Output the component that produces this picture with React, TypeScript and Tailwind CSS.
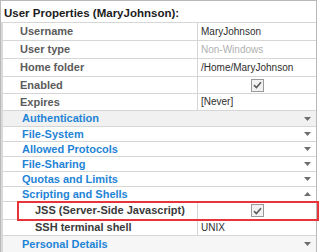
import type { ReactNode } from "react";

type Prop = {
  label: string;
  value?: ReactNode;
  height: string;
  indent?: boolean;
  dark?: boolean;
};

function Arrow({ up }: { up?: boolean }) {
  return (
    <svg width="7" height="4" viewBox="0 0 7 4" className="shrink-0">
      <path d={up ? "M0 4 L7 4 L3.5 0 Z" : "M0 0 L7 0 L3.5 4 Z"} fill="#6e6e6e" />
    </svg>
  );
}

function Check() {
  return (
    <span className="flex h-[13px] w-[13px] items-center justify-center border border-[#9a9a9a] bg-[#f2f2f2]">
      <svg width="9" height="8" viewBox="0 0 9 8">
        <path d="M1 4.2 L3.4 6.5 L8 1.2" fill="none" stroke="#5c5c5c" strokeWidth="1.6" />
      </svg>
    </span>
  );
}

function PropRow({ label, value, height, indent, dark }: Prop) {
  return (
    <div className={`flex border-t border-[#d6d6d6] ${height}`}>
      <div
        className={`flex w-[194px] shrink-0 items-center text-[11px] font-bold ${
          indent ? "pl-[32px]" : "pl-[17px]"
        } ${dark ? "text-[#3a3a3a]" : "text-[#5b5b5b]"}`}
      >
        {label}
      </div>
      <div className="flex flex-1 items-center border-l border-[#d6d6d6] pl-[3px] text-[10px] text-[#2e2e2e]">
        {value}
      </div>
    </div>
  );
}

function CategoryRow({
  label,
  height,
  up,
  bg = "bg-white",
}: {
  label: string;
  height: string;
  up?: boolean;
  bg?: string;
}) {
  return (
    <div
      className={`flex items-center justify-between border-t border-[#d6d6d6] pl-[19px] pr-[5px] ${height} ${bg}`}
    >
      <span className="text-[11px] font-bold text-[#1f84d6]">{label}</span>
      <Arrow up={up} />
    </div>
  );
}

export default function App() {
  return (
    <div className="relative h-[252px] w-[320px] overflow-hidden bg-white font-['Liberation_Sans',Arial,sans-serif] leading-none">
      <div className="w-[317px] border-l border-r border-t border-[#b9b9b9]">
        <div className="h-[21px] pl-[3px] pt-[7px] text-[11.5px] font-bold text-[#1c1c1c]">
          User Properties (MaryJohnson):
        </div>
        <div className="border-l-2 border-[#d9d9d9]">
          <PropRow label="Username" value="MaryJohnson" height="h-[18px]" />
          <PropRow
            label="User type"
            value={<span className="text-[#b0b0b0]">Non-Windows</span>}
            height="h-[18px]"
          />
          <PropRow label="Home folder" value="/Home/MaryJohnson" height="h-[18px]" />
          <PropRow
            label="Enabled"
            value={
              <span className="flex w-full justify-center pr-[3px]">
                <Check />
              </span>
            }
            height="h-[17px]"
          />
          <PropRow label="Expires" value="[Never]" height="h-[17px]" />
          <CategoryRow label="Authentication" height="h-[16px]" bg="bg-[#f1f1f1]" />
          <CategoryRow label="File-System" height="h-[15px]" />
          <CategoryRow label="Allowed Protocols" height="h-[15px]" />
          <CategoryRow label="File-Sharing" height="h-[15px]" />
          <CategoryRow label="Quotas and Limits" height="h-[15px]" />
          <CategoryRow label="Scripting and Shells" height="h-[15px]" up />
          <PropRow
            label="JSS (Server-Side Javascript)"
            value={
              <span className="flex w-full justify-center pr-[3px]">
                <Check />
              </span>
            }
            height="h-[18px]"
            indent
            dark
          />
          <PropRow label="SSH terminal shell" value="UNIX" height="h-[16px]" indent dark />
          <CategoryRow label="Personal Details" height="h-[17px]" bg="bg-[#f6f6f6]" />
        </div>
      </div>
      <div className="pointer-events-none absolute left-[17px] top-[201px] h-[20px] w-[302px] border-2 border-[#e8333a]" />
    </div>
  );
}
